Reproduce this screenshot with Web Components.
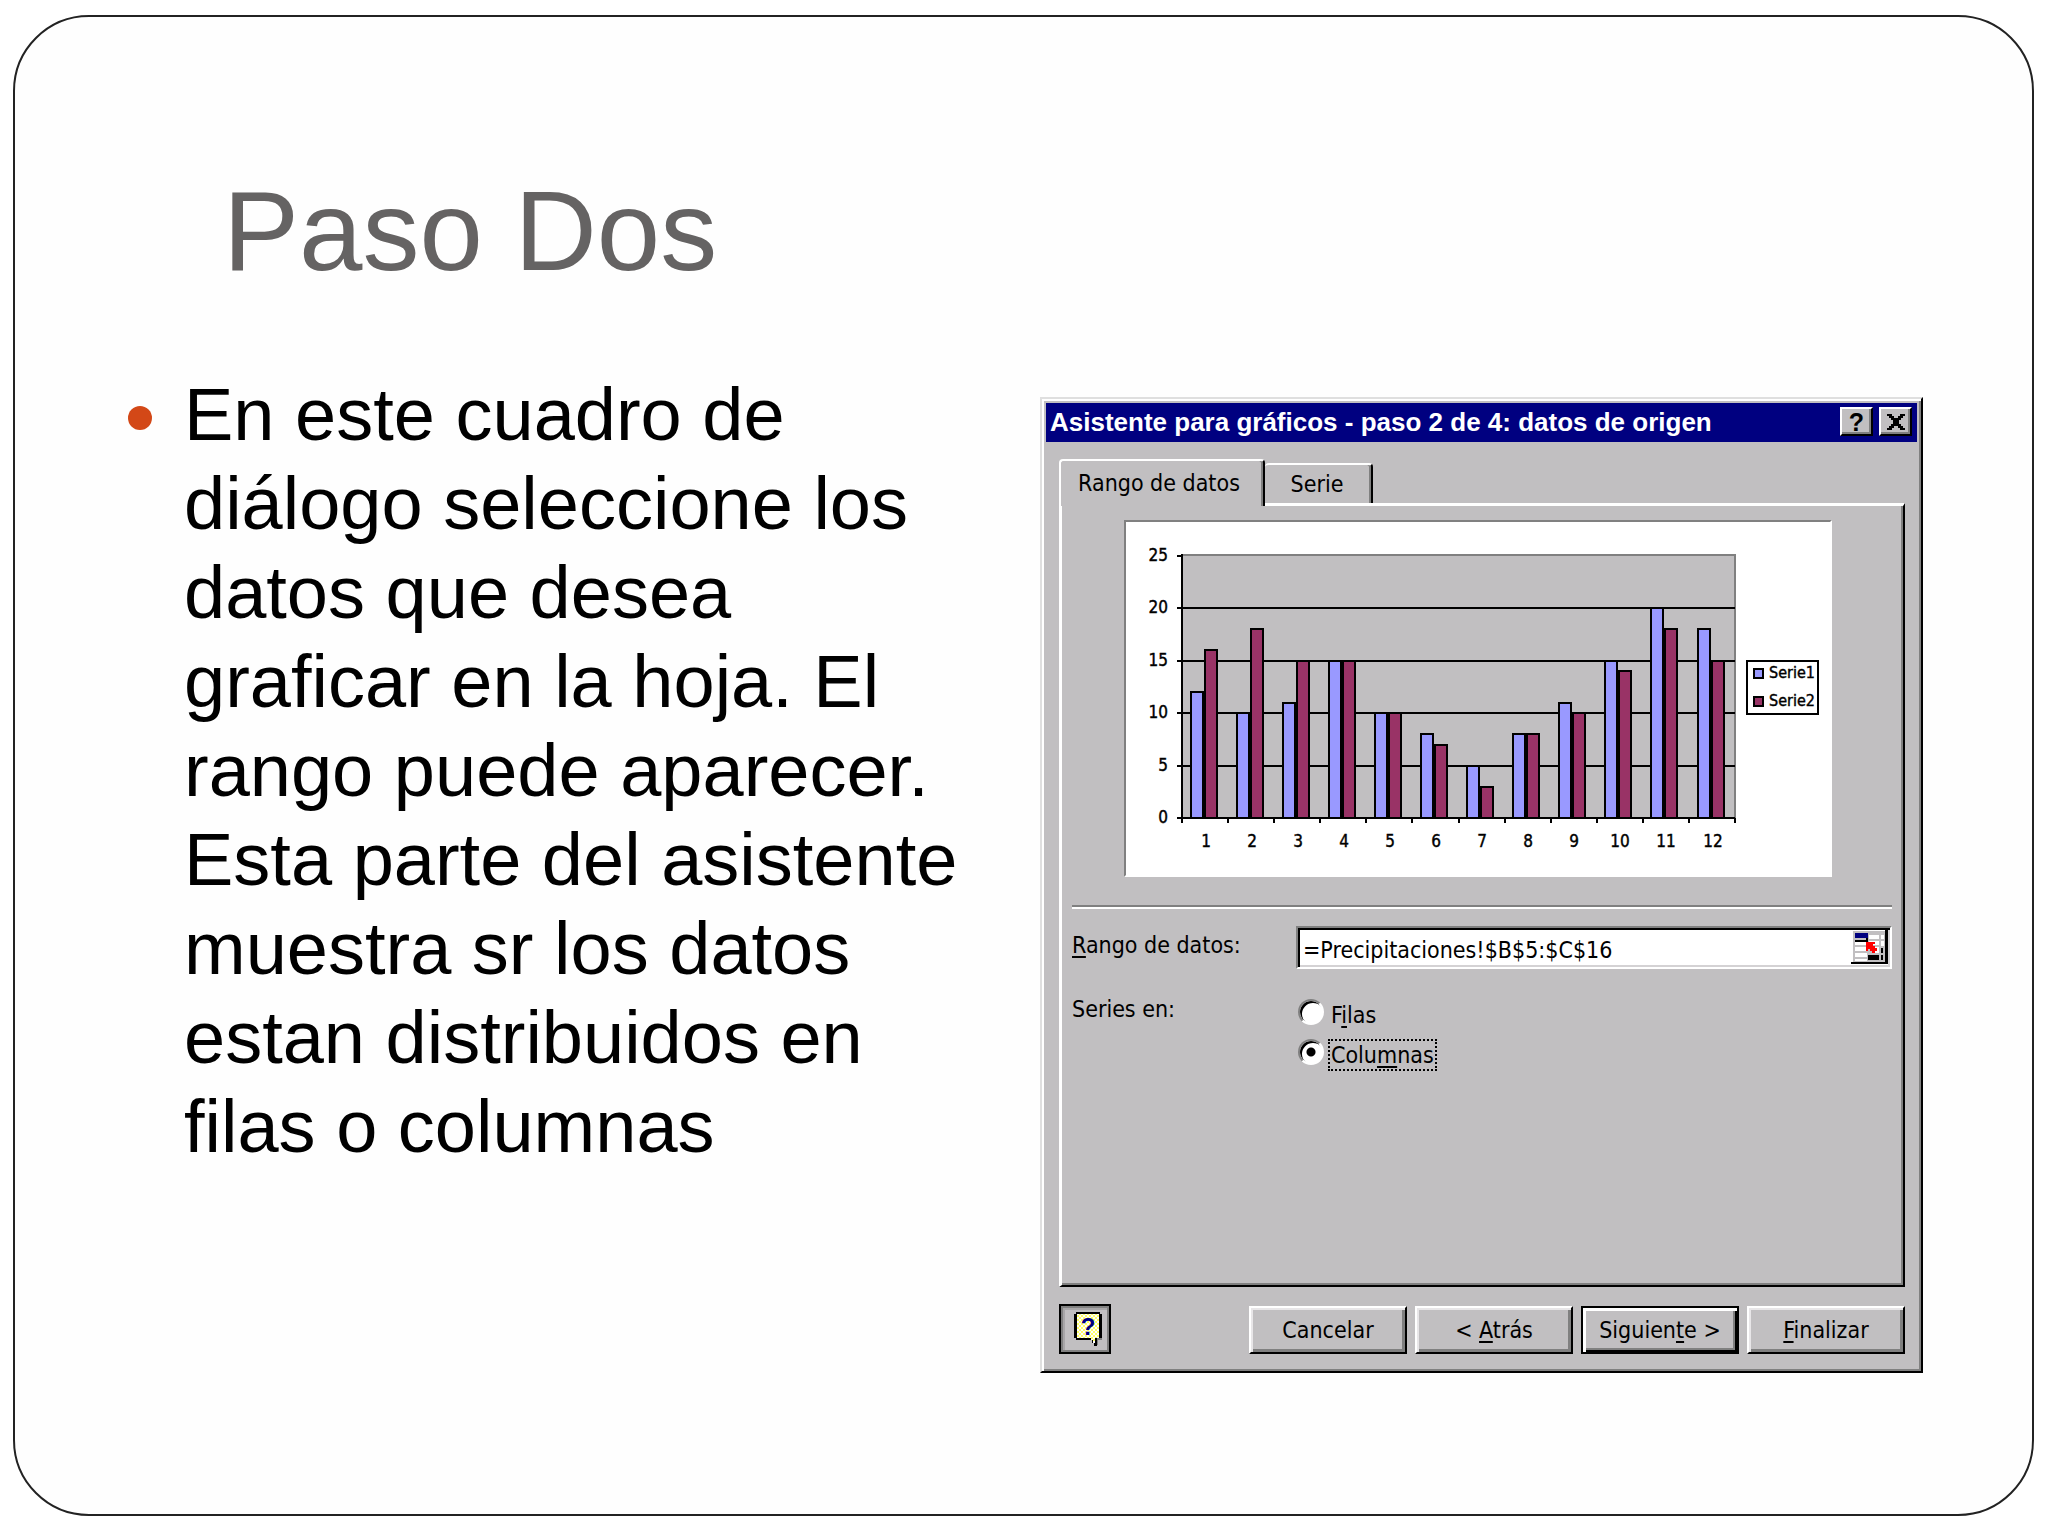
<!DOCTYPE html>
<html lang="es">
<head>
<meta charset="utf-8">
<title>Paso Dos</title>
<style>
  body { margin: 0; background: #fff; font-family: "Liberation Sans", sans-serif; }
</style>
</head>
<body>
<slide-page>
  <span slot="title">Paso Dos</span>
  <slide-bullet>En este cuadro de diálogo seleccione los datos que desea graficar en la hoja. El rango puede aparecer. Esta parte del asistente muestra sr los datos estan distribuidos en filas o columnas</slide-bullet>
  <wizard-dialog slot="figure">
    <span slot="caption">Asistente para gráficos - paso 2 de 4: datos de origen</span>
    <bar-chart></bar-chart>
    <range-form></range-form>
    <help-button slot="help"></help-button>
    <win-button slot="actions">Cancelar</win-button>
    <win-button slot="actions">&lt; <u>A</u>trás</win-button>
    <win-button slot="actions" default>Siguien<u>t</u>e &gt;</win-button>
    <win-button slot="actions"><u>F</u>inalizar</win-button>
  </wizard-dialog>
</slide-page>

<script>
function define(name, html, after) {
  customElements.define(name, class extends HTMLElement {
    constructor() {
      super();
      this.attachShadow({ mode: "open" }).innerHTML = html;
      if (after) after(this.shadowRoot);
    }
  });
}

define("slide-page", `
<style>
  :host { display: flex; padding: 15px 14px 20px 13px; box-sizing: border-box; min-height: 100vh; }
  article { flex: 1; box-sizing: border-box; border: 2px solid #222; border-radius: 76px; background: #fefefe; padding: 149px 109px 60px 113px; }
  h1 { margin: 0 0 74px 95px; font-weight: 400; font-size: 114px; line-height: 130px; color: #656363; }
  .body { display: grid; grid-template-columns: minmax(0, 847fr) minmax(0, 883fr); column-gap: 65px; align-items: start; }
  .figure { padding-top: 27px; }
</style>
<article>
  <h1><slot name="title"></slot></h1>
  <div class="body">
    <div role="list"><slot></slot></div>
    <div class="figure"><slot name="figure"></slot></div>
  </div>
</article>`);

define("slide-bullet", `
<style>
  :host { display: flex; gap: 32px; font-size: 74px; line-height: 89px; color: #000; }
  i { flex: none; width: 24px; height: 24px; margin-top: 36px; border-radius: 50%; background: #d34817; }
  p { margin: 0; }
</style>
<i></i><p role="listitem"><slot></slot></p>`);

define("wizard-dialog", `
<style>
  :host { display: block; box-sizing: border-box; border: 2px solid; border-color: #dfdfdf #000 #000 #dfdfdf; padding: 4px;
    background: #c1bfc1; box-shadow: inset 2px 2px #fff, inset -2px -2px #808080; color: #000;
    font: 23px/32px "DejaVu Sans Condensed", "DejaVu Sans", sans-serif; }
  header { display: flex; align-items: center; gap: 6px; background: #000080; color: #fff; padding: 0 5px 0 4px; }
  h2 { flex: 1; margin: 0; font: bold 26px/39px "Liberation Sans", sans-serif; }
  header button { flex: none; width: 33px; height: 29px; padding: 0; border: 2px solid; border-color: #fff #000 #000 #fff; background: #c1bfc1;
    box-shadow: inset -2px -2px #808080; font: bold 25px/24px "Liberation Sans", sans-serif; color: #000; display: grid; place-items: center; margin-bottom: 2px; }
  main { padding: 17px 12px 0 13px; }
  .tabs { display: flex; align-items: flex-end; height: 44px; }
  .tabs button { box-sizing: border-box; font: inherit; color: #000; background: #c1bfc1; border: 2px solid; border-color: #fff #000 transparent #fff;
    border-radius: 4px 4px 0 0; border-bottom: 0; box-shadow: inset -2px 0 #808080; padding: 0; }
  .tabs .on { position: relative; z-index: 1; width: 206px; height: 47px; margin-bottom: -3px; line-height: 44px; padding: 0 6px 3px 0; }
  .tabs .off { width: 108px; height: 40px; border-left: 0; line-height: 38px; padding-right: 2px; }
  .panel { border: solid; border-width: 3px 2px 2px 3px; border-color: #fff #000 #000 #fff; box-shadow: inset -2px -2px #808080; padding: 14px 11px 214px 10px; }
  footer { display: flex; align-items: flex-end; gap: 8px; padding: 17px 12px 13px 13px; }
  .space { flex: 1; }
</style>
<header>
  <h2><slot name="caption"></slot></h2>
  <button type="button" aria-label="Ayuda">?</button>
  <button type="button" aria-label="Cerrar"><svg width="18" height="16" viewBox="0 0 18 16"><path d="M0 0h5v2h2v2h4v-2h2v-2h5v2h-2v2h-2v2h-2v4h2v2h2v2h2v2h-5v-2h-2v-2h-4v2h-2v2h-5v-2h2v-2h2v-2h2v-4h-2v-2h-2v-2h-2z"/></svg></button>
</header>
<main>
  <div class="tabs" role="tablist">
    <button class="on" role="tab" aria-selected="true">Rango de datos</button>
    <button class="off" role="tab" aria-selected="false">Serie</button>
  </div>
  <div class="panel" role="tabpanel"><slot></slot></div>
</main>
<footer><slot name="help"></slot><span class="space"></span><slot name="actions"></slot></footer>`);

define("bar-chart", `
<style>
  :host { display: block; margin: 0 60px 28px 52px; border: 2px solid; border-color: #808080 #fff #fff #808080; background: #fff; }
  svg { display: block; width: 100%; }
  text { font: 17px "DejaVu Sans Condensed", "DejaVu Sans", sans-serif; fill: #000; stroke: #000; stroke-width: .4px; }
  .key { font-size: 16px; }
</style>
<svg viewBox="0 0 704 353" role="img" aria-label="Serie1 y Serie2"></svg>`, root => {
  const serie1 = [12, 10, 11, 15, 10, 8, 5, 8, 11, 15, 20, 18];
  const serie2 = [16, 18, 15, 15, 10, 7, 3, 8, 10, 14, 18, 15];
  const left = 56, right = 609, base = 296, unit = 10.5, step = (right - left) / 12;
  let s = `<rect x="${left}" y="33" width="${right - left}" height="${base - 33}" fill="#c1bfc1" stroke="#808080" stroke-width="2"/>`;
  for (let v = 0; v <= 25; v += 5) {
    const y = Math.round(base - v * unit);
    s += `<path d="M${left - 5} ${y}H${v === 25 ? left : right}" stroke="#000" stroke-width="2"/>`;
    s += `<text x="42" y="${y + 5}" text-anchor="end">${v}</text>`;
  }
  const bar = (x, v, w, fill) => {
    const y = Math.round(base - v * unit);
    return `<rect x="${x}" y="${y}" width="${w}" height="${base - y}" fill="${fill}" stroke="#000" stroke-width="2"/>`;
  };
  for (let i = 0; i < 12; i++) {
    const x = Math.round(left + i * step - .4);
    s += bar(x + 9, serie1[i], 12, "#9999ff") + bar(x + 23, serie2[i], 12, "#993366");
    s += `<path d="M${x + 22} ${Math.round(base - Math.min(serie1[i], serie2[i]) * unit)}V${base}" stroke="#000" stroke-width="2"/>`;
    s += `<text x="${x + 24}" y="325" text-anchor="middle">${i + 1}</text>`;
  }
  for (let i = 0; i <= 12; i++) s += `<path d="M${Math.round(left + i * step)} ${base}v5" stroke="#000" stroke-width="2"/>`;
  s += `<path d="M${left} 32V301" stroke="#000" stroke-width="2"/>`;
  s += `<rect x="621" y="139" width="71" height="53" fill="#fff" stroke="#000" stroke-width="2"/>`;
  s += `<rect x="628" y="147" width="9" height="9" fill="#9999ff" stroke="#000" stroke-width="2"/><text class="key" x="643" y="156">Serie1</text>`;
  s += `<rect x="628" y="175" width="9" height="9" fill="#993366" stroke="#000" stroke-width="2"/><text class="key" x="643" y="184">Serie2</text>`;
  root.querySelector("svg").innerHTML = s;
});

define("range-form", `
<style>
  :host { display: block; border-top: 2px solid #808080; box-shadow: inset 0 2px #fff; padding-top: 19px; }
  form { display: grid; grid-template-columns: 224px 1fr; row-gap: 23px; }
  .name { line-height: 38px; }
  .series { line-height: 34px; }
  u { text-underline-offset: 3px; text-decoration-thickness: 2px; }
  .field { display: flex; height: 43px; box-sizing: border-box; border: 2px solid; border-color: #808080 #fff #fff #808080; background: #fff;
    box-shadow: inset 2px 2px #000, inset -2px -2px #d4d2d4; padding: 2px; }
  .field input { flex: 1; min-width: 0; border: 0; outline: 0; background: none; font: inherit; color: #000; padding: 4px 0 0 3px; }
  .field button { flex: none; width: 37px; height: 35px; padding: 0; border: 0; background: none; }
  .field svg { display: block; }
  .radios { display: flex; flex-direction: column; gap: 8px; padding: 7px 0 0 2px; }
  .radios label { display: flex; align-items: flex-start; gap: 4px; }
  .radios input { appearance: none; width: 26px; height: 26px; margin: 0; border-radius: 50%; border: 2px solid; border-color: #808080 #fff #fff #808080;
    background: #fff; box-shadow: inset 2px 2px #000; }
  .radios input:checked { background: radial-gradient(circle at 50% 50%, #000 4px, #fff 5px); }
  .radios span { box-sizing: border-box; height: 32px; line-height: 28px; border: 2px dotted transparent; padding: 0 1px; }
  .radios input:checked + span { border-color: #000; }
</style>
<form>
  <label class="name" for="range"><u>R</u>ango de datos:</label>
  <div class="field"><input id="range" type="text" value="=Precipitaciones!$B$5:$C$16">
    <button type="button" aria-label="Contraer"><svg width="37" height="35" viewBox="0 0 37 35">
      <path fill="#c1bfc1" d="M2 1h33v33H2z"/>
      <path fill="#fff" d="M4 12h13v3H4zM4 17h13v4H4zM4 23h12v4H4zM4 29h12v2H4zM18 5h10v4H18zM18 11h10v4H18zM24 17h4v6h-4zM30 5h3v4h-3zM30 11h3v5h-3z"/>
      <path fill="#000080" d="M4 3h13v5H4z"/>
      <path d="M4 10h11V8h2v4H4zM17 25h11v5H17zM30 18h2v5h-2zM30 25h2v5h-2zM34 0h3v34H0v-2h34z"/>
      <path fill="#f00" d="M15 12h9v2h-2v2h2v2h2v3h-2v2h-3v-2h-2v-2h-2v2h-2z"/>
    </svg></button></div>
  <span class="series" id="in">Series en:</span>
  <div class="radios" role="radiogroup" aria-labelledby="in">
    <label><input type="radio" name="dir"><span>F<u>i</u>las</span></label>
    <label><input type="radio" name="dir" checked><span>Colu<u>m</u>nas</span></label>
  </div>
</form>`);

define("help-button", `
<style>
  :host { display: block; }
  button { display: grid; place-items: center; box-sizing: border-box; width: 52px; height: 50px; padding: 0 0 0 5px; border: 2px solid #000; background: #c1bfc1; box-shadow: inset 2px 2px #808080, inset -2px -2px #808080, inset 4px 4px #a8a6a8; }
  text { font: bold 24px "Liberation Sans", sans-serif; fill: #000080; }
</style>
<button type="button" aria-label="Ayudante"><svg width="30" height="36" viewBox="0 0 30 36">
  <defs><pattern id="dots" width="4" height="4" patternUnits="userSpaceOnUse"><path fill="#fff" d="M0 0h4v4H0z"/><path fill="#ff6" d="M0 0h2v2H0zM2 2h2v2H2z"/></pattern></defs>
  <path fill="#808080" d="M27 5h2v24h-4v5h-3v-5H5v-2h22z"/>
  <path d="M3 1h24v2h2v24h-5v8h-3v-3h-2v-3H3v-2H1V3h2z"/>
  <path fill="url(#dots)" d="M4 3h22v24h-4v5h-2v-3h-2v-2H4z"/>
  <text x="15" y="24" text-anchor="middle">?</text>
</svg></button>`);

define("win-button", `
<style>
  :host { display: block; }
  button { box-sizing: border-box; width: 158px; height: 48px; padding: 0; font: inherit; color: #000; background: #c1bfc1; border: 2px solid; border-color: #fff #000 #000 #fff;
    box-shadow: inset 2px 2px #e8e6e8, inset -3px -3px #808080; }
  :host([default]) button { border-color: #000; box-shadow: inset 3px 3px #fff, inset -2px -2px #000, inset -4px -4px #808080; }
  ::slotted(u) { text-underline-offset: 3px; text-decoration-thickness: 2px; }
</style>
<button type="button"><slot></slot></button>`);
</script>
</body>
</html>
